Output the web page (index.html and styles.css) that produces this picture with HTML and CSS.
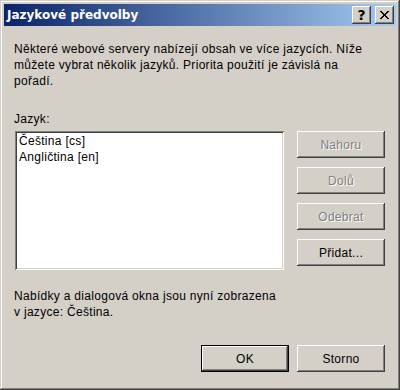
FILE: index.html
```html
<!DOCTYPE html>
<html lang="cs">
<head>
<meta charset="utf-8">
<title>Jazykové předvolby</title>
<link rel="stylesheet" href="styles.css">
</head>
<body>
<div class="window">
  <div class="titlebar">
    <span class="title">Jazykové předvolby</span>
    <div class="caption-buttons">
      <button class="cap-btn help" type="button"><span>?</span></button>
      <button class="cap-btn close" type="button">
        <svg width="9" height="8" viewBox="0 0 9 8" shape-rendering="crispEdges">
          <path d="M0 0h2v1h-2zM7 0h2v1h-2zM1 1h2v1h-2zM6 1h2v1h-2zM2 2h2v1h-2zM5 2h2v1h-2zM3 3h3v1h-3zM3 4h3v1h-3zM2 5h2v1h-2zM5 5h2v1h-2zM1 6h2v1h-2zM6 6h2v1h-2zM0 7h2v1h-2zM7 7h2v1h-2z" fill="#000"/>
        </svg>
      </button>
    </div>
  </div>
  <div class="content">
    <p class="intro">Některé webové servery nabízejí obsah ve více jazycích. Níže<br>můžete vybrat několik jazyků. Priorita použití je závislá na<br>pořadí.</p>
    <div class="label">Jazyk:</div>
    <div class="list-row">
      <div class="listbox">
        <div class="item">Čeština [cs]</div>
        <div class="item">Angličtina [en]</div>
      </div>
      <div class="side-buttons">
        <button class="btn" disabled>Nahoru</button>
        <button class="btn" disabled>Dolů</button>
        <button class="btn" disabled>Odebrat</button>
        <button class="btn">Přidat...</button>
      </div>
    </div>
    <p class="info">Nabídky a dialogová okna jsou nyní zobrazena<br>v jazyce: Čeština.</p>
    <div class="footer">
      <button class="btn default">OK</button>
      <button class="btn">Storno</button>
    </div>
  </div>
</div>
</body>
</html>
```

FILE: styles.css
```css
* { box-sizing: border-box; }
html, body {
  margin: 0;
  padding: 0;
  background: #d4d0c8;
}
body {
  font-family: "Liberation Sans", Arial, sans-serif;
  font-size: 12px;
  letter-spacing: 0.3px;
  color: #000;
}
.window {
  width: 400px;
  height: 390px;
  padding: 4px;
  background: #d4d0c8;
  box-shadow: inset -1px -1px #404040, inset 1px 1px #d4d0c8,
              inset -2px -2px #808080, inset 2px 2px #ffffff;
  display: flex;
  flex-direction: column;
}
.titlebar {
  height: 22px;
  background: linear-gradient(to right, #0a246a, #a6caf0);
  display: flex;
  align-items: center;
  justify-content: space-between;
  padding: 0 2px 0 2px;
}
.title {
  color: #fff;
  font-weight: bold;
  font-size: 12px;
  font-family: "DejaVu Sans", "Liberation Sans", sans-serif;
  letter-spacing: 0;
  padding-left: 1px;
}
.caption-buttons {
  display: flex;
  gap: 4px;
}
.cap-btn {
  width: 19px;
  height: 18px;
  padding: 0;
  margin: 0;
  border: none;
  background: #d4d0c8;
  box-shadow: inset -1px -1px #404040, inset 1px 1px #ffffff,
              inset -2px -2px #808080, inset 2px 2px #d4d0c8;
  display: flex;
  align-items: center;
  justify-content: center;
}
.cap-btn.help span {
  font-family: "DejaVu Sans", sans-serif;
  font-weight: bold;
  font-size: 14px;
  line-height: 14px;
  letter-spacing: 0;
  color: #000;
  margin-top: -1px;
}
.cap-btn.close svg { display: block; margin-top: -1px; }
.content {
  flex: 1;
  padding: 15px 11px 0 11px;
  display: flex;
  flex-direction: column;
}
.intro {
  margin: 0 0 22px -1px;
  line-height: 16px;
}
.label {
  line-height: 16px;
  margin-left: -1px;
  margin-bottom: 4px;
}
.list-row {
  display: flex;
  gap: 13px;
}
.listbox {
  width: 269px;
  height: 139px;
  background: #fff;
  padding: 2px 2px;
  box-shadow: inset 1px 1px #808080, inset -1px -1px #ffffff,
              inset 2px 2px #404040, inset -2px -2px #d4d0c8;
}
.item {
  line-height: 16px;
  padding-left: 2px;
}
.side-buttons {
  display: flex;
  flex-direction: column;
  gap: 9px;
}
.btn {
  width: 88px;
  height: 27px;
  padding: 0;
  margin: 0;
  border: none;
  background: #d4d0c8;
  font-family: "Liberation Sans", Arial, sans-serif;
  font-size: 12px;
  letter-spacing: 0.3px;
  color: #000;
  box-shadow: inset -1px -1px #404040, inset 1px 1px #ffffff,
              inset -2px -2px #808080, inset 2px 2px #d4d0c8;
}
.btn:disabled {
  color: #808080;
  text-shadow: 1px 1px #ffffff;
}
.btn.default {
  box-shadow: inset 0 0 0 1px #000, inset -2px -2px #404040, inset 2px 2px #ffffff,
              inset -3px -3px #808080, inset 3px 3px #d4d0c8;
}
.info {
  margin: 18px 0 0 -1px;
  line-height: 16px;
}
.footer {
  margin-top: 25px;
  display: flex;
  justify-content: flex-end;
  gap: 8px;
}
```
